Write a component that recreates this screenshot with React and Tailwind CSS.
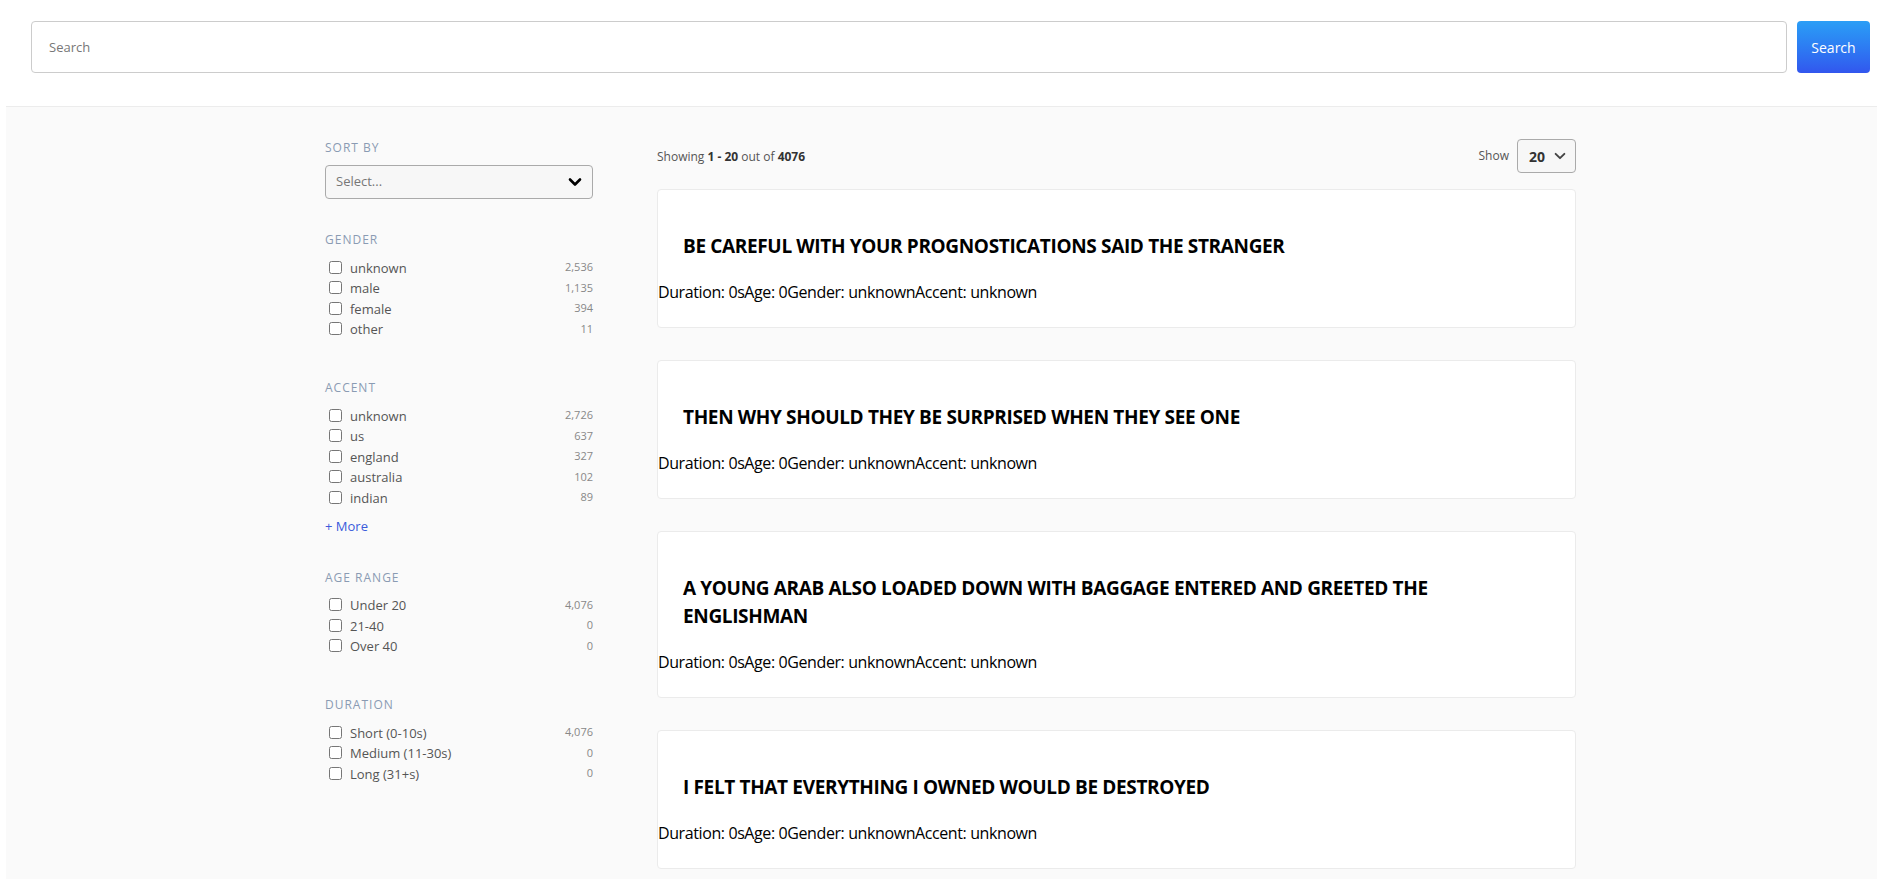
import React from "react";

const font = { fontFamily: '"Open Sans", "Noto Sans", Arial, sans-serif' };

function Chevron({ className, stroke = 3 }) {
  return (
    <svg viewBox="0 0 16 16" className={className} fill="none" stroke="currentColor" strokeWidth={stroke} strokeLinecap="round" strokeLinejoin="round">
      <polyline points="3,5.5 8,10.5 13,5.5" />
    </svg>
  );
}

function Heading({ children }) {
  return (
    <div className="text-[12px] leading-4 tracking-[1px] uppercase text-[#8a9bb3] mb-[9px]">{children}</div>
  );
}

function Row({ label, count }) {
  return (
    <label className="flex items-center h-[20.5px]">
      <input type="checkbox" className="ml-[4px] mr-[8px] w-[13px] h-[13px] m-0 accent-[#333]" />
      <span className="text-[13px] text-[#555] flex-1 translate-y-[1px]">{label}</span>
      <span className="text-[11px] text-[#888]">{count}</span>
    </label>
  );
}

function Section({ title, rows, className = "" }) {
  return (
    <div className={className}>
      <Heading>{title}</Heading>
      {rows.map(([l, c]) => (
        <Row key={l} label={l} count={c} />
      ))}
    </div>
  );
}

function Card({ title }) {
  return (
    <div className="bg-white border border-[#ebebeb] rounded-[4px]">
      <div className="pt-[42px] pl-[25px] pr-[25px] text-[19px] leading-[28px] font-bold tracking-[-0.35px] text-black">{title}</div>
      <div className="mt-[20px] pb-[23px] text-[16px] leading-6 tracking-[-0.4px] text-black">
        Duration: 0sAge: 0Gender: unknownAccent: unknown
      </div>
    </div>
  );
}

export default function App() {
  return (
    <div style={font} className="min-h-[879px] bg-white">
      <div className="flex h-[106px] items-start pt-[21px] pl-[31px] pr-[7px] gap-[10px]">
        <input
          placeholder="Search"
          className="flex-1 h-[52px] border border-[#cccccc] rounded-[4px] px-[17px] text-[13px] text-[#333] placeholder:text-[#777] outline-none"
        />
        <button className="w-[73px] h-[52px] rounded-[4px] text-white text-[14px] bg-gradient-to-b from-[#2b9ef6] to-[#3256ee]">
          Search
        </button>
      </div>
      <div className="ml-[6px] bg-[#fafafa] border-t border-[#ececec] min-h-[773px] flex pl-[319px]">
        <aside className="w-[268px] pt-[33px]">
          <Heading>Sort By</Heading>
          <div className="h-[34px] border border-[#aaaaaa] rounded-[4px] bg-[#f7f7f7] flex items-center justify-between pl-[10px] pr-[9px]">
            <span className="text-[13px] text-[#777]">Select...</span>
            <Chevron className="w-[16px] h-[16px] text-black" stroke={2.6} />
          </div>
          <Section
            className="mt-[33px]"
            title="Gender"
            rows={[["unknown", "2,536"], ["male", "1,135"], ["female", "394"], ["other", "11"]]}
          />
          <Section
            className="mt-[41px]"
            title="Accent"
            rows={[["unknown", "2,726"], ["us", "637"], ["england", "327"], ["australia", "102"], ["indian", "89"]]}
          />
          <div className="mt-[9px] text-[13px] leading-[18px] text-[#3b5bdb]">+ More</div>
          <Section
            className="mt-[35px]"
            title="Age Range"
            rows={[["Under 20", "4,076"], ["21-40", "0"], ["Over 40", "0"]]}
          />
          <Section
            className="mt-[41px]"
            title="Duration"
            rows={[["Short (0-10s)", "4,076"], ["Medium (11-30s)", "0"], ["Long (31+s)", "0"]]}
          />
        </aside>
        <main className="w-[919px] ml-[64px] pt-[32px]">
          <div className="flex items-center justify-between h-[34px]">
            <div className="text-[12px] text-[#555] translate-y-[1px]">
              Showing <b className="text-[#333]">1 - 20</b> out of <b className="text-[#333]">4076</b>
            </div>
            <div className="flex items-center gap-[8px]">
              <span className="text-[12px] text-[#555]">Show</span>
              <div className="w-[59px] h-[34px] border border-[#aaaaaa] rounded-[4px] bg-[#f7f7f7] flex items-center justify-between pl-[11px] pr-[8px]">
                <span className="text-[14px] font-bold text-[#333]">20</span>
                <Chevron className="w-[14px] h-[14px] text-[#444]" stroke={2.2} />
              </div>
            </div>
          </div>
          <div className="mt-[16px] flex flex-col gap-[32px]">
            <Card title="BE CAREFUL WITH YOUR PROGNOSTICATIONS SAID THE STRANGER" />
            <Card title="THEN WHY SHOULD THEY BE SURPRISED WHEN THEY SEE ONE" />
            <Card title="A YOUNG ARAB ALSO LOADED DOWN WITH BAGGAGE ENTERED AND GREETED THE ENGLISHMAN" />
            <Card title="I FELT THAT EVERYTHING I OWNED WOULD BE DESTROYED" />
          </div>
        </main>
      </div>
    </div>
  );
}
